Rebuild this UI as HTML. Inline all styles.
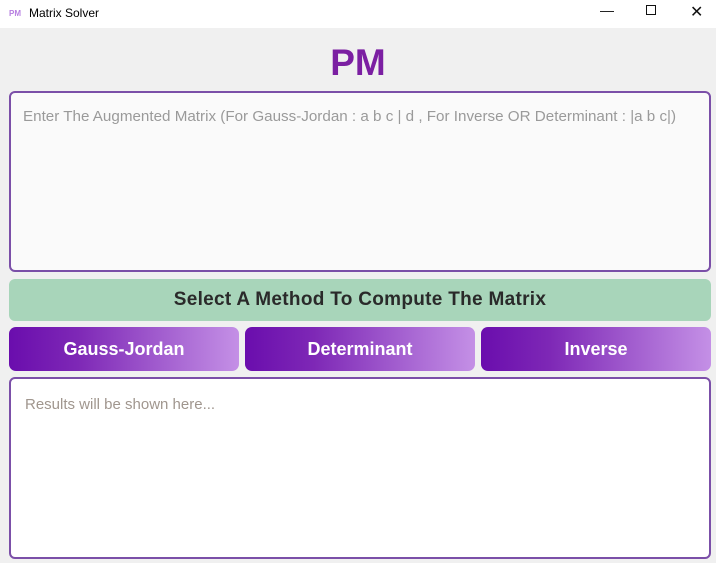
<!DOCTYPE html>
<html><head><style>
*{box-sizing:border-box;margin:0;padding:0}
body{width:716px;height:563px;background:#f0f0f0;font-family:"Liberation Sans",sans-serif;position:relative;overflow:hidden}
.tb{position:absolute;left:0;top:0;width:716px;height:28px;background:#fff}
.tb .t{position:absolute;left:29px;top:6px;font-size:12px;color:#000}
.tb .ic{position:absolute;left:9px;top:9px;font-size:8px;font-weight:bold;color:#b67ee0;letter-spacing:0}
.ctl{position:absolute;top:4px;font-size:14px;color:#111}
h1{position:absolute;top:42px;left:0;width:716px;text-align:center;font-size:37px;color:#7b1fa2;font-weight:bold}
.box{position:absolute;left:9px;width:702px;border:2px solid #7b4fa8;border-radius:6px}
.in{top:91px;height:181px;background:#fafafa}
.in span{position:absolute;left:12px;top:15px;font-size:15.2px;color:#9a9a9a}
.res{top:377px;height:182px;background:#fff}
.res span{position:absolute;left:14px;top:17px;font-size:15px;color:#a0968e}
.g{position:absolute;left:9px;top:279px;width:702px;height:42px;background:#a8d5ba;border-radius:6px;text-align:center;line-height:42px;font-size:19px;font-weight:bold;color:#2a2a2a;letter-spacing:0.3px}
.b{position:absolute;top:327px;width:230px;height:44px;border-radius:7px;background:linear-gradient(90deg,#6a0dad,#7e28b6 30%,#c490e6);color:#fff;font-weight:bold;font-size:18px;text-align:center;line-height:44px}
</style></head><body>
<div class="tb"><span class="ic">PM</span><span class="t">Matrix Solver</span>
<span class="ctl" style="left:600px;top:2px">&#8212;</span>
<span class="ctl" style="left:646px;top:5px;width:10px;height:10px;border:1px solid #111"></span>
<span class="ctl" style="left:690px;top:2px;font-size:16px">&#10005;</span></div>
<h1>PM</h1>
<div class="box in"><span>Enter The Augmented Matrix (For Gauss-Jordan : a b c | d , For Inverse OR Determinant : |a b c|)</span></div>
<div class="g">Select A Method To Compute The Matrix</div>
<div class="b" style="left:9px">Gauss-Jordan</div>
<div class="b" style="left:245px">Determinant</div>
<div class="b" style="left:481px">Inverse</div>
<div class="box res"><span>Results will be shown here...</span></div>
</body></html>
